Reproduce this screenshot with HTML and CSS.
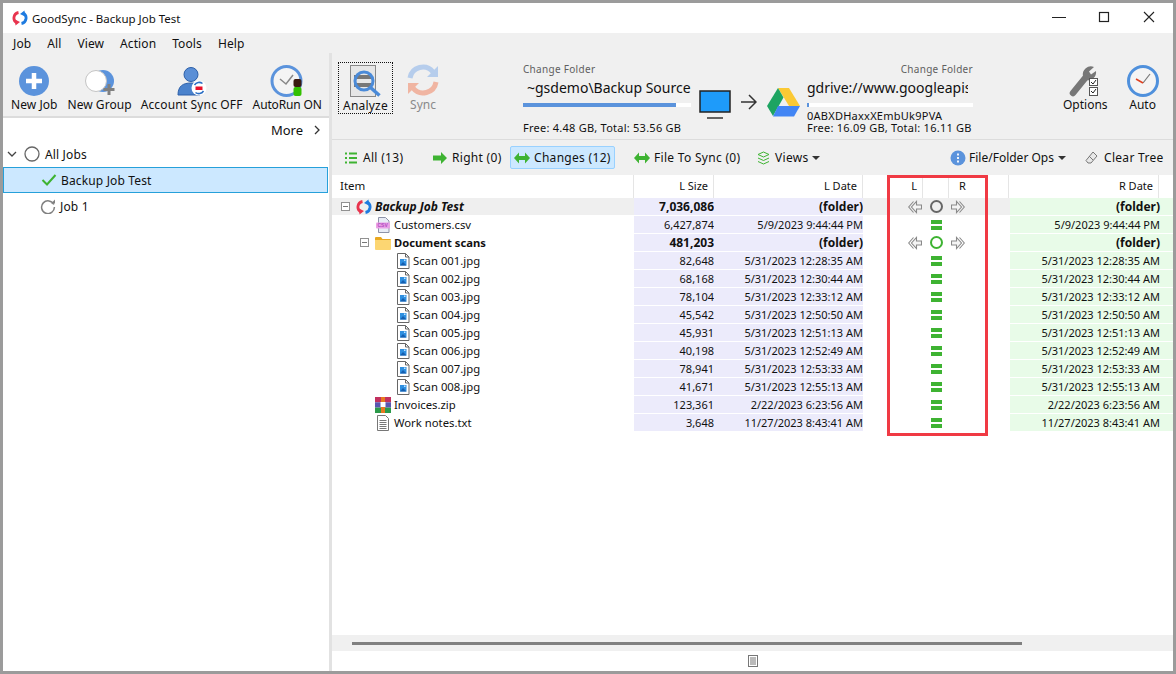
FILE: index.html
```html
<!DOCTYPE html>
<html lang="en">
<head>
<meta charset="utf-8">
<title>GoodSync - Backup Job Test</title>
<link rel="stylesheet" href="styles.css">
</head>
<body>
<svg class="defs" width="0" height="0">
  <symbol id="logo" viewBox="0 0 16 16">
    <path d="M6.500 2.500A5.600 5.600 0 0 0 5 13" fill="none" stroke="#e8344e" stroke-width="2.800"/>
    <path d="M3 9.500l5 2.500-4.500 3.500z" fill="#e8344e"/>
    <path d="M9.500 13.500A5.600 5.600 0 0 0 11 3" fill="none" stroke="#1e7be0" stroke-width="2.800"/>
    <path d="M13 6.500L8 4l4.500-3.500z" fill="#1e7be0"/>
  </symbol>
  <symbol id="img" viewBox="0 0 14 16">
    <path d="M1.500.5h8l3.500 3.500v11.500H1.500z" fill="#fff" stroke="#666"/>
    <path d="M9.500.5V4H13" fill="none" stroke="#666"/>
    <rect x="4" y="6" width="6.500" height="6.500" fill="#2e8fe0"/>
    <path d="M4 12.500l3-3.500 3.500 3.500z" fill="#155fb0"/>
    <rect x="8" y="6.500" width="1.500" height="1.500" fill="#bfe3ff"/>
  </symbol>
  <symbol id="al" viewBox="0 0 14 14">
    <path d="M8.500 1.500v3.500h5v4h-5v3.500L3.500 7z" fill="#f4f4f4" stroke="#8a8a8a" stroke-width="1.100"/>
    <path d="M5.500 1.500L.7 7l4.800 5.500" fill="none" stroke="#8a8a8a" stroke-width="1.100"/>
  </symbol>
  <symbol id="ar" viewBox="0 0 14 14">
    <path d="M5.500 1.500v3.500h-5v4h5v3.500L10.500 7z" fill="#f4f4f4" stroke="#8a8a8a" stroke-width="1.100"/>
    <path d="M8.500 1.500L13.300 7l-4.800 5.500" fill="none" stroke="#8a8a8a" stroke-width="1.100"/>
  </symbol>
  <symbol id="same" viewBox="0 0 11 10">
    <rect width="11" height="4" fill="#3eb332"/><rect y="6" width="11" height="4" fill="#3eb332"/>
  </symbol>
  <symbol id="both" viewBox="0 0 16 12">
    <path d="M0 6l5-5.500v3.500h6V.5L16 6l-5 5.500V8H5v3.500z" fill="#3eb332"/>
  </symbol>
</svg>

<div class="window">
  <header class="titlebar">
    <svg class="title-logo" width="16" height="16"><use href="#logo"/></svg>
    <span class="title-text">GoodSync - Backup Job Test</span>
    <div class="win-controls">
      <svg width="16" height="16" viewBox="0 0 16 16"><path d="M1 8.500h14" stroke="#222"/></svg>
      <svg width="16" height="16" viewBox="0 0 16 16"><rect x="3.500" y="3.500" width="9" height="9" fill="none" stroke="#222" stroke-width="1.200"/></svg>
      <svg width="16" height="16" viewBox="0 0 16 16"><path d="M3 3l10 10M13 3L3 13" stroke="#222" stroke-width="1.100"/></svg>
    </div>
  </header>
  <nav class="menubar">
    <span>Job</span><span>All</span><span>View</span><span>Action</span><span>Tools</span><span>Help</span>
  </nav>
  <div class="main">
    <aside class="sidebar">
      <div class="side-tools">
        <div class="tool">
          <svg width="34" height="34" viewBox="0 0 34 34"><circle cx="17" cy="17" r="15" fill="#5b93dc"/><path d="M17 9v16M9 17h16" stroke="#fff" stroke-width="4.500"/></svg>
          <span>New Job</span>
        </div>
        <div class="tool tool-group">
          <svg width="34" height="34" viewBox="0 0 34 34"><circle cx="20" cy="17" r="11" fill="#5b93dc"/><circle cx="13" cy="17" r="10.500" fill="#fff" stroke="#c4c4c4"/><path d="M26 20v11M20.500 25.500h11" stroke="#808080" stroke-width="3"/></svg>
          <span>New Group</span>
        </div>
        <div class="tool tool-account">
          <svg width="34" height="34" viewBox="0 0 34 34"><circle cx="16" cy="10.500" r="7" fill="#5b8fd6" stroke="#2c5fa8"/><path d="M3 31c0-9 5-12 13-12s9 3 9 6v6z" fill="#4a82cc" stroke="#2c5fa8"/><circle cx="24" cy="24" r="7.500" fill="#fff"/><rect x="20.500" y="22.500" width="7" height="3.500" fill="#e8102a"/><path d="M19.500 21a5.500 5.500 0 0 1 8-1.500M28.500 27a5.500 5.500 0 0 1-8 1.500" fill="none" stroke="#2c6fc4" stroke-width="1.500"/></svg>
          <span>Account Sync OFF</span>
        </div>
        <div class="tool tool-auto">
          <svg width="34" height="34" viewBox="0 0 34 34"><circle cx="16.500" cy="17" r="14.500" fill="#f4f4f4" stroke="#5b93dc" stroke-width="3"/><path d="M10 15l6 5 7-9" fill="none" stroke="#888" stroke-width="1.500"/><rect x="23.500" y="15" width="8" height="8" rx="2" fill="#3a1a10"/><rect x="23.500" y="23" width="8" height="9" rx="2" fill="#32c000"/></svg>
          <span>AutoRun ON</span>
        </div>
      </div>
      <div class="more"><span>More</span><svg width="8" height="10" viewBox="0 0 8 10"><path d="M2 1l4 4-4 4" fill="none" stroke="#333" stroke-width="1.300"/></svg></div>
      <div class="job job-all">
        <svg width="10" height="8" viewBox="0 0 10 8"><path d="M1 2l4 4 4-4" fill="none" stroke="#444" stroke-width="1.300"/></svg>
        <svg width="16" height="16" viewBox="0 0 16 16"><circle cx="8" cy="8" r="7" fill="none" stroke="#666" stroke-width="1.300"/></svg>
        <span>All Jobs</span>
      </div>
      <div class="job job-selected">
        <svg width="16" height="14" viewBox="0 0 16 14"><path d="M1.500 7l4.500 4.500L14.500 2" fill="none" stroke="#3eb332" stroke-width="2"/></svg>
        <span>Backup Job Test</span>
      </div>
      <div class="job job-child">
        <svg width="16" height="16" viewBox="0 0 16 16"><path d="M13.800 6.500A6.400 6.400 0 1 0 14.400 9" fill="none" stroke="#808080" stroke-width="1.500"/><path d="M11 5.500h4V1.500z" fill="#808080"/></svg>
        <span>Job 1</span>
      </div>
    </aside>

    <section class="content">
      <div class="toolbar">
        <div class="action action-focus">
          <svg width="32" height="34" viewBox="0 0 32 34"><rect x=".5" y=".5" width="25" height="31" fill="#e6e6e6" stroke="#888"/><rect x="4" y="10" width="17" height="4" fill="#777"/><rect x="4" y="18" width="17" height="4" fill="#777"/><circle cx="14" cy="16" r="9" fill="none" stroke="#4a8ad8" stroke-width="3"/><path d="M20.500 22.500l9 8" stroke="#4a8ad8" stroke-width="3.500"/></svg>
          <span>Analyze</span>
        </div>
        <div class="action action-off">
          <svg width="32" height="32" viewBox="0 0 32 32"><path d="M3 14A13 13 0 0 1 26 8" fill="none" stroke="#b6cdec" stroke-width="5"/><path d="M31 2v11H20z" fill="#b6cdec"/><path d="M29 18A13 13 0 0 1 6 24" fill="none" stroke="#f0b5a2" stroke-width="5"/><path d="M1 30V19h11z" fill="#f0b5a2"/></svg>
          <span>Sync</span>
        </div>
        <div class="folder folder-left">
          <div class="change">Change Folder</div>
          <div class="path path-left">~gsdemo\Backup Source</div>
          <div class="bar"><div class="bar-fill" style="width:91%"></div></div>
          <div class="free">Free: 4.48 GB, Total: 53.56 GB</div>
        </div>
        <svg class="monitor" width="32" height="30" viewBox="0 0 32 30"><rect x="1" y="1" width="30" height="21" fill="#1e9bfa" stroke="#222" stroke-width="1.500"/><path d="M8 28h16" stroke="#333" stroke-width="1.500"/></svg>
        <svg class="arrow" width="16" height="16" viewBox="0 0 16 16"><path d="M0 8h15M8 1l7 7-7 7" fill="none" stroke="#333" stroke-width="1.500"/></svg>
        <svg class="drive" width="33" height="29" viewBox="0 0 33 29"><path d="M11 0h11l11 18H22z" fill="#fbc934"/><path d="M11 0l5.500 9.500L6 28 0 18z" fill="#1da462"/><path d="M11 18h22l-6 10.500H6z" fill="#4285f4"/></svg>
        <div class="folder folder-right">
          <div class="change change-right">Change Folder</div>
          <div class="path path-clip">gdrive://www.googleapis</div>
          <div class="bar"><div class="bar-fill" style="width:1.500%"></div></div>
          <div class="free free-id">0ABXDHaxxXEmbUk9PVA</div>
          <div class="free">Free: 16.09 GB, Total: 16.11 GB</div>
        </div>
        <div class="action action-options">
          <svg width="34" height="34" viewBox="0 0 34 34"><path d="M5 29L18 13" stroke="#777" stroke-width="6.500" stroke-linecap="round"/><path d="M15 12a8 8 0 0 1 11-9l-5 4.500 2 3 5-3.500a8 8 0 0 1-10 9z" fill="#777"/><rect x="21.500" y="14.500" width="8" height="7" fill="#fff" stroke="#555"/><rect x="21.500" y="23.500" width="8" height="8" fill="#fff" stroke="#555"/><path d="M23 18l2 2 3-4M23 27l2 2 3-4" fill="none" stroke="#222"/></svg>
          <span>Options</span>
        </div>
        <div class="action action-auto">
          <svg width="34" height="34" viewBox="0 0 34 34"><circle cx="17" cy="17" r="14.500" fill="#f4f4f4" stroke="#4f90dc" stroke-width="3"/><path d="M17 19l7-9" fill="none" stroke="#777" stroke-width="1.200"/><path d="M10 15l7 4" stroke="#e04020" stroke-width="1.500"/></svg>
          <span>Auto</span>
        </div>
      </div>

      <div class="filters">
        <div class="filter f-all">
          <svg width="12" height="12" viewBox="0 0 12 12"><path d="M0 1.500h2M4 1.500h8M0 6h2M4 6h8M0 10.500h2M4 10.500h8" stroke="#3eb332" stroke-width="1.800"/></svg>
          <span>All (13)</span>
        </div>
        <div class="filter f-right">
          <svg width="14" height="12" viewBox="0 0 14 12"><path d="M0 3.500h8V0l6 6-6 6V8.500H0z" fill="#3eb332"/></svg>
          <span>Right (0)</span>
        </div>
        <div class="filter f-changes">
          <svg width="16" height="12"><use href="#both"/></svg>
          <span>Changes (12)</span>
        </div>
        <div class="filter f-file">
          <svg width="16" height="12"><use href="#both"/></svg>
          <span>File To Sync (0)</span>
        </div>
        <div class="filter f-views">
          <svg width="13" height="14" viewBox="0 0 13 14"><g fill="none" stroke="#3eb332"><path d="M6.500 1L12 3.500 6.500 6 1 3.500z"/><path d="M1 7l5.500 2.500L12 7"/><path d="M1 10.500L6.500 13l5.500-2.500"/></g></svg>
          <span>Views</span><i class="caret"></i>
        </div>
        <div class="filter f-ops">
          <svg width="16" height="16" viewBox="0 0 16 16"><circle cx="8" cy="8" r="7.500" fill="#5b93dc"/><path d="M8 3.500v2M8 7v2M8 10.500v2" stroke="#fff" stroke-width="1.800"/></svg>
          <span>File/Folder Ops</span><i class="caret"></i>
        </div>
        <div class="filter f-clear">
          <svg width="13" height="13" viewBox="0 0 13 13"><path d="M8 1l4 4-6 7H3L1 9.500z" fill="#e8e8e8" stroke="#777"/><path d="M4 5l4 4" stroke="#777"/></svg>
          <span>Clear Tree</span>
        </div>
      </div>

      <div class="table">
        <div class="thead">
          <div class="th th-item">Item</div>
          <div class="th">L Size</div>
          <div class="th">L Date</div>
          <div class="th th-l">L</div>
          <div class="th"></div>
          <div class="th th-r">R</div>
          <div class="th th-rdate">R Date</div>
        </div>

        <div class="row row-root">
          <div class="c-item ind0"><i class="tree-box"></i><svg width="16" height="16"><use href="#logo"/></svg><span class="root-name">Backup Job Test</span></div>
          <div class="c-lsize bold">7,036,086</div><div class="c-ldate bold">(folder)</div>
          <div class="c-status"><svg width="14" height="14"><use href="#al"/></svg><i class="ring ring-grey"></i><svg width="14" height="14"><use href="#ar"/></svg></div>
          <div class="c-rdate bold">(folder)</div>
        </div>
        <div class="row">
          <div class="c-item ind1"><svg width="16" height="16" viewBox="0 0 16 16"><path d="M3.500.5h7l3.500 3.500v11.500H3.500z" fill="#e8ecf6" stroke="#8d93a8"/><rect x="1" y="5.500" width="14" height="6" rx="1" fill="#e9a0e6"/><text class="csv" x="2.500" y="10.300">CSV</text></svg><span>Customers.csv</span></div>
          <div class="c-lsize">6,427,874</div><div class="c-ldate">5/9/2023 9:44:44 PM</div>
          <div class="c-status"><svg width="11" height="10"><use href="#same"/></svg></div>
          <div class="c-rdate">5/9/2023 9:44:44 PM</div>
        </div>
        <div class="row">
          <div class="c-item ind-folder"><i class="tree-box"></i><svg width="16" height="14" viewBox="0 0 16 14"><path d="M0 2a1 1 0 0 1 1-1h5l1.500 2H15a1 1 0 0 1 1 1v1H0z" fill="#e9a820"/><path d="M0 4h16v9a1 1 0 0 1-1 1H1a1 1 0 0 1-1-1z" fill="#fcd672"/></svg><span class="bold-name">Document scans</span></div>
          <div class="c-lsize bold">481,203</div><div class="c-ldate bold">(folder)</div>
          <div class="c-status"><svg width="14" height="14"><use href="#al"/></svg><i class="ring ring-green"></i><svg width="14" height="14"><use href="#ar"/></svg></div>
          <div class="c-rdate bold">(folder)</div>
        </div>
        <div class="row">
          <div class="c-item ind2"><svg width="14" height="16"><use href="#img"/></svg><span>Scan 001.jpg</span></div>
          <div class="c-lsize">82,648</div><div class="c-ldate">5/31/2023 12:28:35 AM</div>
          <div class="c-status"><svg width="11" height="10"><use href="#same"/></svg></div>
          <div class="c-rdate">5/31/2023 12:28:35 AM</div>
        </div>
        <div class="row">
          <div class="c-item ind2"><svg width="14" height="16"><use href="#img"/></svg><span>Scan 002.jpg</span></div>
          <div class="c-lsize">68,168</div><div class="c-ldate">5/31/2023 12:30:44 AM</div>
          <div class="c-status"><svg width="11" height="10"><use href="#same"/></svg></div>
          <div class="c-rdate">5/31/2023 12:30:44 AM</div>
        </div>
        <div class="row">
          <div class="c-item ind2"><svg width="14" height="16"><use href="#img"/></svg><span>Scan 003.jpg</span></div>
          <div class="c-lsize">78,104</div><div class="c-ldate">5/31/2023 12:33:12 AM</div>
          <div class="c-status"><svg width="11" height="10"><use href="#same"/></svg></div>
          <div class="c-rdate">5/31/2023 12:33:12 AM</div>
        </div>
        <div class="row">
          <div class="c-item ind2"><svg width="14" height="16"><use href="#img"/></svg><span>Scan 004.jpg</span></div>
          <div class="c-lsize">45,542</div><div class="c-ldate">5/31/2023 12:50:50 AM</div>
          <div class="c-status"><svg width="11" height="10"><use href="#same"/></svg></div>
          <div class="c-rdate">5/31/2023 12:50:50 AM</div>
        </div>
        <div class="row">
          <div class="c-item ind2"><svg width="14" height="16"><use href="#img"/></svg><span>Scan 005.jpg</span></div>
          <div class="c-lsize">45,931</div><div class="c-ldate">5/31/2023 12:51:13 AM</div>
          <div class="c-status"><svg width="11" height="10"><use href="#same"/></svg></div>
          <div class="c-rdate">5/31/2023 12:51:13 AM</div>
        </div>
        <div class="row">
          <div class="c-item ind2"><svg width="14" height="16"><use href="#img"/></svg><span>Scan 006.jpg</span></div>
          <div class="c-lsize">40,198</div><div class="c-ldate">5/31/2023 12:52:49 AM</div>
          <div class="c-status"><svg width="11" height="10"><use href="#same"/></svg></div>
          <div class="c-rdate">5/31/2023 12:52:49 AM</div>
        </div>
        <div class="row">
          <div class="c-item ind2"><svg width="14" height="16"><use href="#img"/></svg><span>Scan 007.jpg</span></div>
          <div class="c-lsize">78,941</div><div class="c-ldate">5/31/2023 12:53:33 AM</div>
          <div class="c-status"><svg width="11" height="10"><use href="#same"/></svg></div>
          <div class="c-rdate">5/31/2023 12:53:33 AM</div>
        </div>
        <div class="row">
          <div class="c-item ind2"><svg width="14" height="16"><use href="#img"/></svg><span>Scan 008.jpg</span></div>
          <div class="c-lsize">41,671</div><div class="c-ldate">5/31/2023 12:55:13 AM</div>
          <div class="c-status"><svg width="11" height="10"><use href="#same"/></svg></div>
          <div class="c-rdate">5/31/2023 12:55:13 AM</div>
        </div>
        <div class="row">
          <div class="c-item ind1"><svg width="16" height="16" viewBox="0 0 16 16"><rect width="16" height="5.300" fill="#c2305f"/><rect y="5.300" width="16" height="5.300" fill="#5a55b0"/><rect y="10.600" width="16" height="5.400" fill="#2c9a4a"/><rect x="6" width="4" height="16" fill="#e87a20"/><rect x="5.500" y="5" width="5" height="5" fill="#fff"/></svg><span>Invoices.zip</span></div>
          <div class="c-lsize">123,361</div><div class="c-ldate">2/22/2023 6:23:56 AM</div>
          <div class="c-status"><svg width="11" height="10"><use href="#same"/></svg></div>
          <div class="c-rdate">2/22/2023 6:23:56 AM</div>
        </div>
        <div class="row">
          <div class="c-item ind1"><svg width="16" height="16" viewBox="0 0 16 16"><path d="M2.500.5h8l3 3v12h-11z" fill="#fff" stroke="#777"/><path d="M4.500 5.500h7M4.500 7.500h7M4.500 9.500h7M4.500 11.500h7M4.500 13.500h7" stroke="#777"/></svg><span>Work notes.txt</span></div>
          <div class="c-lsize">3,648</div><div class="c-ldate">11/27/2023 8:43:41 AM</div>
          <div class="c-status"><svg width="11" height="10"><use href="#same"/></svg></div>
          <div class="c-rdate">11/27/2023 8:43:41 AM</div>
        </div>
        <div class="highlight"></div>
      </div>

      <div class="scrollbar"><div class="thumb"></div></div>
      <div class="statusbar">
        <svg width="12" height="12" viewBox="0 0 12 12"><rect x="1.500" y=".5" width="9" height="11" fill="#fff" stroke="#777"/><path d="M3 3h6M3 5h6M3 7h6M3 9h6" stroke="#777"/></svg>
      </div>
    </section>
  </div>
</div>
</body>
</html>
```
FILE: styles.css
```css
* { box-sizing: border-box; }
html, body { margin: 0; padding: 0; }
body { width: 1176px; height: 674px; overflow: hidden; font-family: "Noto Sans", "DejaVu Sans", sans-serif; font-size: 12px; color: #111; background: #fff; }
.defs { position: absolute; }
svg { display: block; flex: none; }
.window { width: 1176px; height: 674px; border: 3px solid #9b9b9b; display: flex; flex-direction: column; background: #fff; }

.titlebar { height: 30px; display: flex; align-items: center; background: #fff; padding-left: 9px; flex: none; }
.title-text { margin-left: 4px; font-size: 11.5px; }
.win-controls { margin-left: auto; display: flex; gap: 29px; padding-right: 16px; margin-top: -2px; }

.menubar { height: 20px; background: #f0f0f0; display: flex; gap: 16px; padding-left: 10px; align-items: center; flex: none; letter-spacing: .1px; }

.main { flex: 1; display: flex; min-height: 0; }
.sidebar { width: 326px; flex: none; background: #fff; }
.side-tools { height: 65px; background: #f0f0f0; border-bottom: 2px solid #dcdcdc; display: flex; gap: 10px; padding: 11px 0 0 8px; }
.tool { display: flex; flex-direction: column; align-items: center; gap: 0; line-height: 14px; white-space: nowrap; letter-spacing: .05px; }
.tool-group { margin-right: -1px; }
.tool-account { letter-spacing: .15px; }
.tool-auto { letter-spacing: -.15px; }

.more { height: 23px; display: flex; align-items: center; justify-content: flex-end; gap: 10px; padding-right: 8px; font-size: 13px; }
.job { display: flex; align-items: center; letter-spacing: .15px; }
.job-all { height: 26px; padding-left: 4px; }
.job-all span { margin-left: 5px; }
.job-all svg + svg { margin-left: 7px; }
.job-selected { height: 26px; padding-left: 37px; gap: 4px; background: #cce8ff; border: 1px solid #26a0da; margin-right: 1px; }
.job-child { height: 26px; padding-left: 37px; gap: 4px; }

.content { flex: 1; min-width: 0; display: flex; flex-direction: column; background: #fff; border-left: 3px solid #e2e2e2; }

.toolbar { height: 87px; flex: none; background: #f0f0f0; border-bottom: 1px solid #dcdcdc; display: flex; align-items: flex-start; }
.action { display: flex; flex-direction: column; align-items: center; line-height: 14px; }
.action-focus { margin: 9px 0 0 6px; width: 55px; height: 52px; border: 1px dotted #111; padding-top: 2px; letter-spacing: .2px; }
.action-off { margin: 11px 0 0 13px; color: #8a8a8a; width: 34px; gap: 2px; }
.action-options { margin: 11px 0 0 90px; }
.action-auto { margin: 11px 0 0 18px; }

.folder { font-size: 11px; }
.folder-left { width: 168px; margin: 9px 0 0 83px; }
.folder-right { width: 166px; margin: 9px 0 0 7px; }
.change { color: #5f5f5f; font-size: 10px; line-height: 14px; letter-spacing: .3px; }
.change-right { text-align: right; }
.path { font-size: 14px; line-height: 20px; height: 21px; margin-top: 2px; white-space: nowrap; overflow: hidden; }
.path-left { padding-left: 4px; }
.path-clip { width: 161px; }
.bar { height: 4px; background: #fff; margin-top: 4px; }
.bar-fill { height: 100%; background: #5b93dc; }
.free { line-height: 12px; white-space: nowrap; letter-spacing: .25px; }
.folder-left .free { margin-top: 15px; }
.free-id { margin-top: 3px; }
.monitor { margin: 37px 0 0 8px; }
.arrow { margin: 41px 0 0 10px; }
.drive { margin: 35px 0 0 10px; }

.filters { height: 35px; flex: none; background: #f0f0f0; display: flex; align-items: center; padding-left: 13px; letter-spacing: .3px; }
.filter { display: flex; align-items: center; height: 23px; white-space: nowrap; }
.f-all { gap: 6px; width: 88px; }
.f-right { gap: 5px; width: 77px; }
.f-changes { gap: 4px; width: 105px; padding-left: 3px; background: #cce8ff; border: 1px solid #99d1ff; border-radius: 2px; }
.f-file { gap: 4px; margin-left: 19px; width: 123px; }
.f-views { gap: 5px; width: 66px; }
.f-views .caret { margin-left: -2px; }
.f-ops { gap: 3px; margin-left: 127px; width: 117px; letter-spacing: 0; }
.f-ops .caret { margin-left: 1px; }
.f-clear { gap: 6px; margin-left: 18px; }
.caret { width: 0; height: 0; border: 4px solid transparent; border-top: 4px solid #333; border-bottom: 0; }

.table { flex: 1; min-height: 0; position: relative; font-size: 11px; }
.thead { display: grid; grid-template-columns: 302px 80px 149px 60px 26px 60px 150px; height: 23px; }
.th { display: flex; align-items: center; justify-content: flex-end; padding: 0 5px 2px 0; border-right: 1px solid #e5e5e5; font-size: 11px; }
.th-item { justify-content: flex-start; padding-left: 8px; font-size: 11.5px; }
.th-l { padding-right: 5px; }
.th-r { justify-content: flex-start; padding: 0 0 2px 10px; }

.row { display: grid; grid-template-columns: 302px 80px 149px 147px 163px; height: 18px; line-height: 17px; }
.row > div { height: 17px; white-space: nowrap; }
.c-item { display: flex; align-items: center; font-size: 11.3px; }
.c-item span { margin-left: 3px; }
.c-lsize { background: #ecebfb; text-align: right; }
.c-ldate { background: #ecebfb; text-align: right; }
.c-rdate { background: #e8fbe8; text-align: right; padding-right: 13px; }
.c-status { display: flex; align-items: center; justify-content: center; gap: 8px; }
.row-root .c-item, .row-root .c-status { background: #efefef; }
.bold { font-weight: 700; font-size: 12px; }
.bold-name { font-weight: 700; font-size: 11.2px; }
.root-name { font-weight: 700; font-style: italic; font-size: 12px; }
.ind0 { padding-left: 9px; }
.ind0 .tree-box { margin-right: 6px; }
.ind1 { padding-left: 43px; }
.ind-folder { padding-left: 28px; }
.ind-folder .tree-box { margin-right: 6px; }
.ind2 { padding-left: 64px; }
.tree-box { width: 9px; height: 9px; border: 1px solid #919191; background: linear-gradient(#777, #777) center / 5px 1px no-repeat #fff; flex: none; }
.ring { width: 13px; height: 13px; border-radius: 50%; border: 2px solid #666; display: block; }
.ring-green { border-color: #3eb332; }
.csv { font-size: 5px; font-weight: 700; fill: #b04cc0; font-family: "Liberation Sans", sans-serif; }
.highlight { position: absolute; left: 555px; top: 0; width: 101px; height: 261px; border: 3px solid #f03a44; pointer-events: none; }

.scrollbar { height: 16px; flex: none; background: #f0f0f0; padding: 7px 0 0 20px; }
.thumb { width: 670px; height: 3px; background: #808080; }
.statusbar { height: 20px; flex: none; display: flex; justify-content: center; align-items: center; }
```
